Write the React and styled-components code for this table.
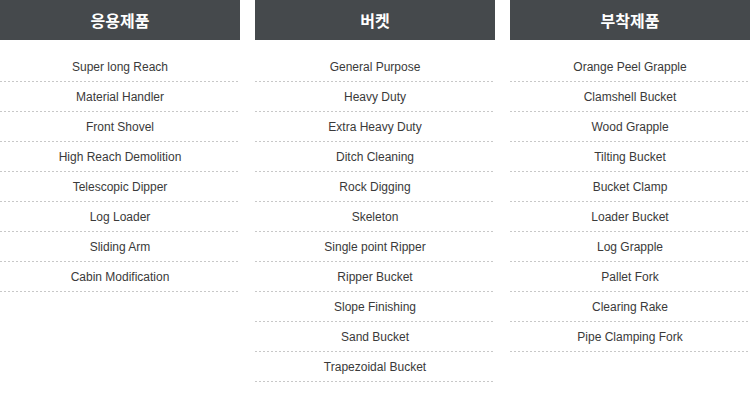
import React from "react";
import styled, { createGlobalStyle } from "styled-components";

const columns = [
  {
    title: "응용제품",
    items: [
      "Super long Reach",
      "Material Handler",
      "Front Shovel",
      "High Reach Demolition",
      "Telescopic Dipper",
      "Log Loader",
      "Sliding Arm",
      "Cabin Modification",
    ],
  },
  {
    title: "버켓",
    items: [
      "General Purpose",
      "Heavy Duty",
      "Extra Heavy Duty",
      "Ditch Cleaning",
      "Rock Digging",
      "Skeleton",
      "Single point Ripper",
      "Ripper Bucket",
      "Slope Finishing",
      "Sand Bucket",
      "Trapezoidal Bucket",
    ],
  },
  {
    title: "부착제품",
    items: [
      "Orange Peel Grapple",
      "Clamshell Bucket",
      "Wood Grapple",
      "Tilting Bucket",
      "Bucket Clamp",
      "Loader Bucket",
      "Log Grapple",
      "Pallet Fork",
      "Clearing Rake",
      "Pipe Clamping Fork",
    ],
  },
];

function App() {
  return (
    <>
      <GlobalStyle />
      <Wrap>
        {columns.map((col) => (
          <Column key={col.title}>
            <Header>{col.title}</Header>
            <List>
              {col.items.map((item) => (
                <Item key={item}>{item}</Item>
              ))}
            </List>
          </Column>
        ))}
      </Wrap>
    </>
  );
}

const GlobalStyle = createGlobalStyle`
  body {
    margin: 0;
    background: #fff;
    font-family: "Liberation Sans", "Noto Sans CJK KR", sans-serif;
  }
`;

const Wrap = styled.div`
  width: 750px;
  display: grid;
  grid-template-columns: repeat(3, 240px);
  column-gap: 15px;
`;

const Column = styled.div`
  display: flex;
  flex-direction: column;
`;

const Header = styled.div`
  height: 40px;
  background: #45494c;
  color: #fff;
  display: flex;
  align-items: center;
  justify-content: center;
  font-family: "Noto Sans CJK KR", sans-serif;
  font-size: 16px;
  font-weight: 700;
`;

const List = styled.ul`
  list-style: none;
  margin: 0;
  padding: 12px 0 0;
`;

const Item = styled.li`
  height: 27px;
  line-height: 27px;
  padding: 2px 0 1px;
  text-align: center;
  font-size: 12px;
  color: #3a3a3a;
  background: repeating-linear-gradient(
      to right,
      #c8c8c8 0,
      #c8c8c8 2px,
      transparent 2px,
      transparent 4px
    )
    bottom / 100% 1px no-repeat;
`;

export default App;
